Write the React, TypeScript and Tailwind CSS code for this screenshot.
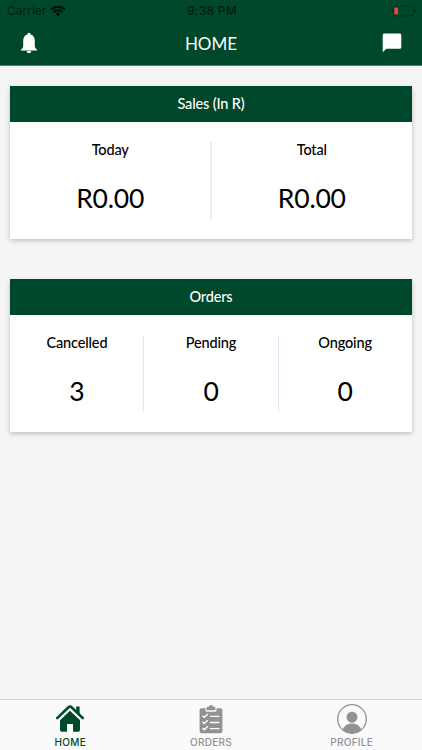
import { useState } from "react";

const sales = [
  { id: 1, label: "Today", value: "R0.00" },
  { id: 2, label: "Total", value: "R0.00" },
];

const orders = [
  { id: 1, label: "Cancelled", value: "3" },
  { id: 2, label: "Pending", value: "0" },
  { id: 3, label: "Ongoing", value: "0" },
];

const HomeIcon = () => (
  <svg viewBox="0 0 30 28" className="h-7 w-[30px]" fill="currentColor">
    <path d="M21.2 2.600h3.400v8.200l-3.400-3.200z" />
    <path d="M2.200 14.100 13.500 3.200a2.100 2.100 0 0 1 3 0L27.800 14.100" fill="none" stroke="currentColor" strokeWidth="2.600" strokeLinecap="round" strokeLinejoin="round" />
    <path d="M15 6.800 25 16.300v9.600a1.800 1.800 0 0 1-1.800 1.800h-5.200v-7.700h-6v7.700H6.800A1.800 1.800 0 0 1 5 25.900v-9.600z" />
  </svg>
);

const OrdersIcon = () => (
  <svg viewBox="0 0 24 30" className="h-[30px] w-6" fill="currentColor">
    <path d="M2.5 4.2h5V7h9V4.2h5a1.9 1.9 0 0 1 1.9 1.9v21.2a1.9 1.9 0 0 1-1.9 1.9h-19a1.9 1.9 0 0 1-1.9-1.9V6.1a1.9 1.9 0 0 1 1.9-1.9z" />
    <path d="M8.4 2.8h1.3a2.4 2.4 0 0 1 4.6 0h1.3a.8.8 0 0 1 .8.8v2.7H7.6V3.6a.8.8 0 0 1 .8-.8z" />
    <path d="M7 4.2v3.1h10V4.2" fill="none" stroke="#fafafa" strokeWidth=".9" />
    <path d="m3.500 11.700 1.700 1.600 3.700-3.300M3.500 17.900l1.700 1.600 3.700-3.300M3.500 24.100l1.700 1.600 3.700-3.300" fill="none" stroke="#fafafa" strokeWidth="1.5" />
    <path d="M11.500 12.300h8.500M11.500 18.500h8.500M11.500 24.700h8.500" stroke="#fafafa" strokeWidth="1.3" strokeLinecap="round" />
  </svg>
);

const ProfileIcon = () => (
  <svg viewBox="0 0 30 30" className="size-[30px]" fill="currentColor">
    <circle cx="15" cy="15" r="14.3" fill="none" stroke="currentColor" strokeWidth="1.3" />
    <circle cx="15" cy="13.2" r="5.5" />
    <path d="M5.900 25.800c1.100-4 4.700-6.200 9.100-6.200s8 2.200 9.100 6.200A14.200 14.200 0 0 1 15 29.200a14.200 14.200 0 0 1-9.100-3.400z" />
  </svg>
);

const tabs = [
  { id: "home", text: "HOME", Icon: HomeIcon },
  { id: "orders", text: "ORDERS", Icon: OrdersIcon },
  { id: "profile", text: "PROFILE", Icon: ProfileIcon },
];

const StatusBar = () => (
  <div className="relative flex h-[22px] items-center justify-between pl-[7px] pr-[5px] font-['Inter',sans-serif] text-[12px] text-[#001d10]">
    <div className="flex flex-1 items-center gap-1">
      <span>Carrier</span>
      <svg viewBox="0 0 16 12" className="h-3 w-4" fill="none" stroke="#001008" strokeWidth="2.2">
        <path d="M1.2 4.6a9.8 9.8 0 0 1 13.6 0M3.6 7.2a6.3 6.3 0 0 1 8.8 0" />
        <path d="M8 11.3 5.6 9a3.4 3.4 0 0 1 4.8 0z" fill="#001008" stroke="none" />
      </svg>
    </div>
    <span className="font-medium tracking-[0.3px]">9:38 PM</span>
    <div className="flex flex-1 justify-end">
      <svg viewBox="0 0 25 12" className="h-3 w-[25px]" fill="none">
        <rect x="1" y="1" width="21" height="10" rx="2.5" stroke="#002f1b" />
        <rect x="2.3" y="2.4" width="3.7" height="7.2" rx="1" fill="#e24b36" />
        <path d="M23.5 4.3c1 .4 1 3 0 3.4z" fill="#002515" />
      </svg>
    </div>
  </div>
);

type CardProps = {
  title: string;
  items: { id: number; label: string; value: string }[];
  divider: string;
};

const Card = ({ title, items, divider }: CardProps) => (
  <section className="bg-white shadow-[0_1.5px_5px_rgba(0,0,0,0.24)]">
    <h2 className="flex h-9 items-center justify-center bg-[#00482b] text-[14.5px] tracking-[-0.15px] font-medium text-white">
      {title}
    </h2>
    <div className="flex h-[117px] py-5">
      {items.map((item, index) => (
        <div
          key={item.id}
          className={`flex flex-1 flex-col items-center ${index < items.length - 1 ? divider : ""}`}
        >
          <span className="-mt-px text-[14.5px] leading-[17px] font-medium tracking-[-0.15px]">{item.label}</span>
          <span className="mt-6 text-[26.5px] leading-8 tracking-[-0.2px]">{item.value}</span>
        </div>
      ))}
    </div>
  </section>
);

const App = () => {
  const [activeTab, setActiveTab] = useState("home");

  return (
    <div className="flex h-screen flex-col bg-[#f5f5f5] font-['Lato',sans-serif] text-black">
      <header className="h-[66px] border-b border-[#527d69] bg-[#00482b]">
        <StatusBar />
        <div className="flex h-[42px] items-center justify-between px-5">
          <button aria-label="Notifications">
            <svg viewBox="0 0 18 22" className="h-[22px] w-[18px]" fill="#fff">
              <path d="M9 .8c1 0 1.6.7 1.6 1.7 2.8.8 4.2 2.9 4.2 6.2v4.800c0 2.200.8 3.300 2.400 4.300v.7H.8v-.7c1.600-1 2.400-2.100 2.400-4.300V8.700c0-3.300 1.400-5.400 4.200-6.200C7.400 1.500 8 .8 9 .8zM6.700 19.100h4.600a2.300 2.100 0 0 1-4.600 0z" />
            </svg>
          </button>
          <h1 className="pl-0.5 pt-px text-[17px] text-white">HOME</h1>
          <button aria-label="Messages">
            <svg viewBox="0 0 20 20" className="size-5" fill="#fff">
              <path d="M2.200.6h15.600A1.500 1.500 0 0 1 19.300 2.100v12.200a1.500 1.500 0 0 1-1.500 1.500H4.300L.7 19.300V2.100A1.500 1.500 0 0 1 2.200.6z" />
            </svg>
          </button>
        </div>
      </header>
      <main className="flex flex-1 flex-col gap-10 px-[10.4px] pt-5">
        <Card title="Sales (In R)" items={sales} divider="border-r-2 border-[#e3f0fa]" />
        <Card title="Orders" items={orders} divider="border-r border-[#dbe8f5]" />
      </main>
      <nav className="flex h-[51px] border-t border-[#d2d2d2] bg-[#fafafa] font-['Inter',sans-serif]">
        {tabs.map(({ id, text, Icon }) => (
          <button
            key={id}
            onClick={() => setActiveTab(id)}
            className={`flex flex-1 flex-col items-center pt-1 ${activeTab === id ? "text-[#00482b]" : "text-[#929292]"}`}
          >
            <span className="flex h-8 items-start">
              <Icon />
            </span>
            <span className="text-[10px] leading-3 font-medium tracking-[0.3px]">{text}</span>
          </button>
        ))}
      </nav>
    </div>
  );
};

export default App;
